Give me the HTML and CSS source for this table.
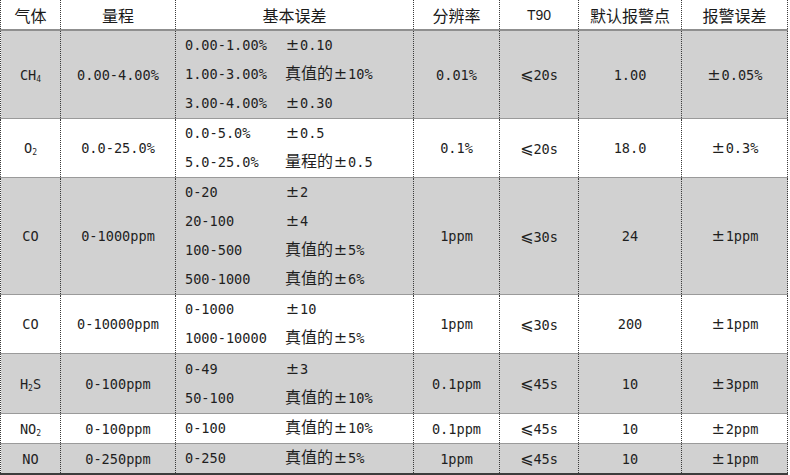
FILE: index.html
```html
<!DOCTYPE html>
<html lang="zh">
<head>
<meta charset="utf-8">
<title>气体参数表</title>
<link rel="stylesheet" href="styles.css">
</head>
<body>
<table class="spec">
  <colgroup>
    <col class="c-gas"><col class="c-range"><col class="c-err"><col class="c-res"><col class="c-t90"><col class="c-alarm"><col class="c-aerr">
  </colgroup>
  <thead>
    <tr class="head">
      <th>气体</th><th>量程</th><th>基本误差</th><th>分辨率</th><th class="lat">T90</th><th>默认报警点</th><th>报警误差</th>
    </tr>
  </thead>
  <tbody>
    <tr class="gray h88">
      <td>CH<sub>4</sub></td><td>0.00-4.00%</td>
      <td class="err">
        <div class="ln"><span class="a">0.00-1.00%</span><span class="pm">±</span>0.10</div>
        <div class="ln"><span class="a">1.00-3.00%</span><span class="cj">真值的</span><span class="pm">±</span>10%</div>
        <div class="ln"><span class="a">3.00-4.00%</span><span class="pm">±</span>0.30</div>
      </td>
      <td>0.01%</td><td><span class="le">⩽</span>20s</td><td>1.00</td><td><span class="pm">±</span>0.05%</td>
    </tr>
    <tr class="white h59">
      <td>O<sub>2</sub></td><td>0.0-25.0%</td>
      <td class="err">
        <div class="ln"><span class="a">0.0-5.0%</span><span class="pm">±</span>0.5</div>
        <div class="ln"><span class="a">5.0-25.0%</span><span class="cj">量程的</span><span class="pm">±</span>0.5</div>
      </td>
      <td>0.1%</td><td><span class="le">⩽</span>20s</td><td>18.0</td><td><span class="pm">±</span>0.3%</td>
    </tr>
    <tr class="gray h116">
      <td>CO</td><td>0-1000ppm</td>
      <td class="err">
        <div class="ln"><span class="a">0-20</span><span class="pm">±</span>2</div>
        <div class="ln"><span class="a">20-100</span><span class="pm">±</span>4</div>
        <div class="ln"><span class="a">100-500</span><span class="cj">真值的</span><span class="pm">±</span>5%</div>
        <div class="ln"><span class="a">500-1000</span><span class="cj">真值的</span><span class="pm">±</span>6%</div>
      </td>
      <td>1ppm</td><td><span class="le">⩽</span>30s</td><td>24</td><td><span class="pm">±</span>1ppm</td>
    </tr>
    <tr class="white h59">
      <td>CO</td><td>0-10000ppm</td>
      <td class="err">
        <div class="ln"><span class="a">0-1000</span><span class="pm">±</span>10</div>
        <div class="ln"><span class="a">1000-10000</span><span class="cj">真值的</span><span class="pm">±</span>5%</div>
      </td>
      <td>1ppm</td><td><span class="le">⩽</span>30s</td><td>200</td><td><span class="pm">±</span>1ppm</td>
    </tr>
    <tr class="gray h60">
      <td>H<sub>2</sub>S</td><td>0-100ppm</td>
      <td class="err">
        <div class="ln"><span class="a">0-49</span><span class="pm">±</span>3</div>
        <div class="ln"><span class="a">50-100</span><span class="cj">真值的</span><span class="pm">±</span>10%</div>
      </td>
      <td>0.1ppm</td><td><span class="le">⩽</span>45s</td><td>10</td><td><span class="pm">±</span>3ppm</td>
    </tr>
    <tr class="white h30">
      <td>NO<sub>2</sub></td><td>0-100ppm</td>
      <td class="err">
        <div class="ln"><span class="a">0-100</span><span class="cj">真值的</span><span class="pm">±</span>10%</div>
      </td>
      <td>0.1ppm</td><td><span class="le">⩽</span>45s</td><td>10</td><td><span class="pm">±</span>2ppm</td>
    </tr>
    <tr class="gray h29 last">
      <td>NO</td><td>0-250ppm</td>
      <td class="err">
        <div class="ln"><span class="a">0-250</span><span class="cj">真值的</span><span class="pm">±</span>5%</div>
      </td>
      <td>1ppm</td><td><span class="le">⩽</span>45s</td><td>10</td><td><span class="pm">±</span>1ppm</td>
    </tr>
  </tbody>
</table>
</body>
</html>
```

FILE: styles.css
```css
html, body {
  margin: 0;
  padding: 0;
  background: #ffffff;
}

.spec {
  border-collapse: collapse;
  table-layout: fixed;
  width: 787px;
  font-family: "DejaVu Sans Mono", "Noto Sans CJK SC", monospace;
  font-size: 13.6px;
  color: #1f1f1f;
}

.c-gas { width: 60px; }
.c-range { width: 115px; }
.c-err { width: 238px; }
.c-res { width: 86px; }
.c-t90 { width: 79px; }
.c-alarm { width: 103px; }
.c-aerr { width: 106px; }

.spec th,
.spec td {
  border-left: 1px dotted #3a3a3a;
  border-right: 1px dotted #3a3a3a;
  border-bottom: 1px solid #9a9a9a;
  text-align: center;
  vertical-align: middle;
  padding: 0;
  white-space: nowrap;
}

.spec th {
  font-family: "Noto Sans CJK SC", sans-serif;
  font-weight: normal;
  font-size: 16px;
  color: #1a1a1a;
  height: 29px;
  border-bottom: 2px solid #8f8f8f;
}

.spec th.lat {
  font-family: "Liberation Sans", "Noto Sans CJK SC", sans-serif;
  font-size: 14px;
}

.gray td { background: #d1d1d1; }
.white td { background: #ffffff; }

.h88 td { height: 87px; }
.h59 td { height: 58px; }
.h116 td { height: 115px; }
.h60 td { height: 59px; }
.h30 td { height: 29px; }
.h29 td { height: 28px; }

.last td { border-bottom: 3px solid #3c3c3c; }

.spec sub {
  font-size: 8px;
  vertical-align: -2px;
  line-height: 0;
}

.spec td.err {
  text-align: left;
  padding-left: 9px;
}

.ln {
  height: 29px;
  line-height: 29px;
}

.ln .a {
  display: inline-block;
  width: 100px;
}

.cj {
  font-family: "Noto Sans CJK SC", sans-serif;
  font-size: 16px;
  line-height: 1;
}

.pm {
  display: inline-block;
  width: 15px;
  text-align: center;
  font-family: "DejaVu Sans", sans-serif;
  font-size: 16px;
  line-height: 1;
}

.le {
  font-family: "DejaVu Sans", sans-serif;
  font-size: 16px;
}
```
